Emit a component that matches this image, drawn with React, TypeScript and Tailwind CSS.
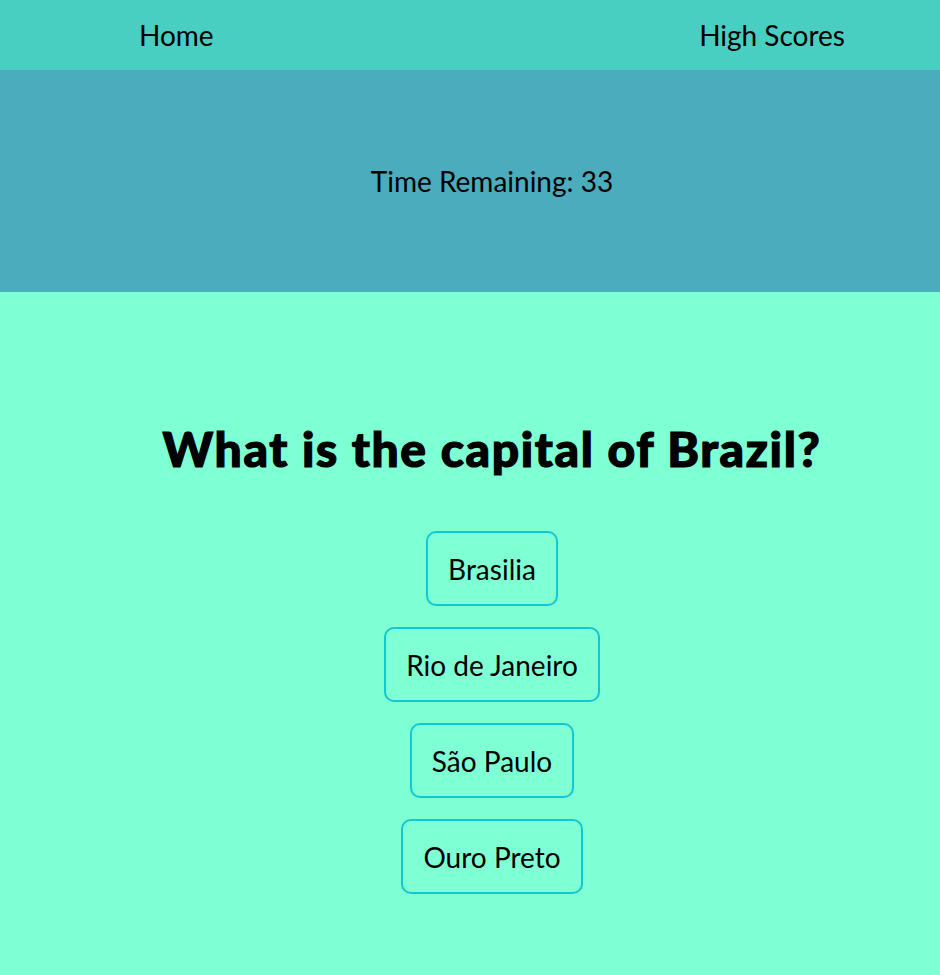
const answers = ["Brasilia", "Rio de Janeiro", "São Paulo", "Ouro Preto"];

export default function App() {
  return (
    <div className="min-h-[975px] bg-[#7fffd4] font-['Lato',sans-serif] text-black">
      <nav className="flex h-[70px] items-center justify-between bg-[#48cfc1] pl-[139px] pr-[95px] text-[28px]">
        <a href="#">Home</a>
        <a href="#">High Scores</a>
      </nav>

      <header className="flex h-[222px] items-center justify-center bg-[#4aacbc] pl-[44px] text-[28px]">
        <p>Time Remaining: 33</p>
      </header>

      <main className="flex flex-col items-center pl-[44px] pt-[124px]">
        {/* heavier look, closer to the bold humanist face in the design */}
        <h1 className="text-[48px] font-black leading-[66px] tracking-[1.6px] [-webkit-text-stroke:1.2px_black]">
          What is the capital of Brazil?
        </h1>
        <div className="mt-[49px] flex flex-col items-center gap-[21px]">
          {answers.map((a) => (
            <button
              key={a}
              className="h-[75px] rounded-[10px] border-2 border-[#12c6d2] px-[20px] text-[28px]"
            >
              {a}
            </button>
          ))}
        </div>
      </main>
    </div>
  );
}
